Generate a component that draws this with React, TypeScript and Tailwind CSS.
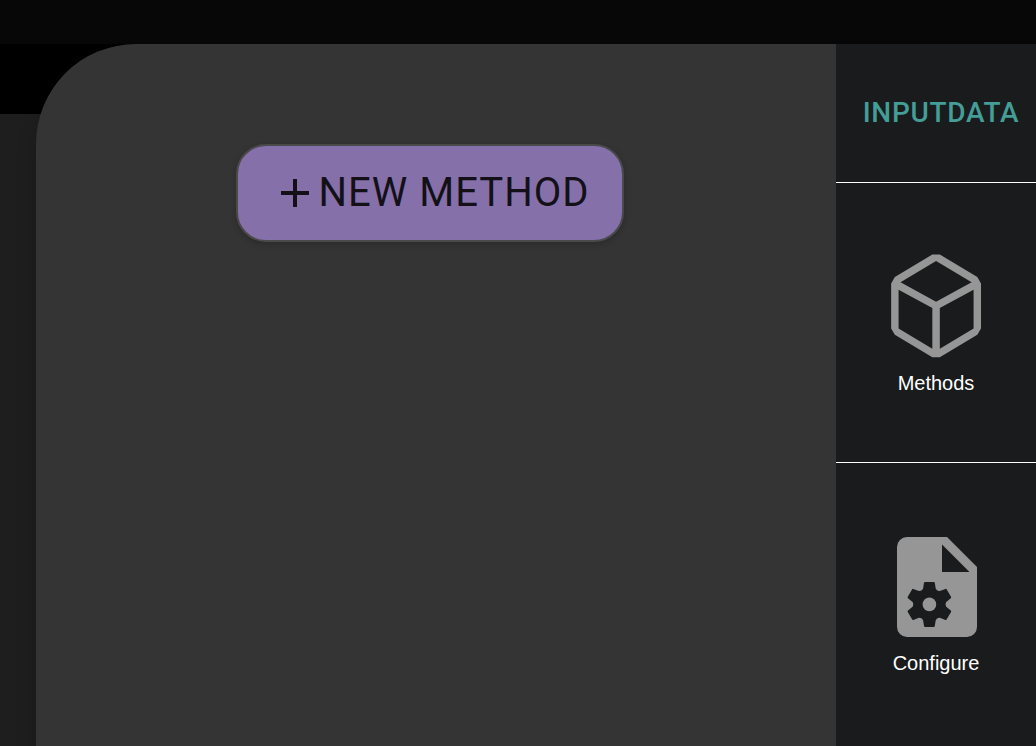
import type { ReactNode } from "react";

const teeth = [0, 60, 120, 180, 240, 300];

function PlusIcon() {
  return (
    <svg viewBox="0 0 24 24" className="size-12" fill="currentColor" aria-hidden="true">
      <path d="M19 13h-6v6h-2v-6H5v-2h6V5h2v6h6v2z" />
    </svg>
  );
}

function MethodsIcon() {
  return (
    <svg viewBox="0 0 16 16" className="size-[120px]" fill="currentColor" aria-hidden="true">
      <path
        fillRule="evenodd"
        clipRule="evenodd"
        d="M13.51 4l-5-3h-1l-5 3-.49.86v6l.49.85 5 3h1l5-3 .49-.85v-6L13.51 4zm-6 9.56l-4.5-2.7V5.7l4.5 2.45v5.41zM3.27 4.7l4.74-2.84 4.74 2.84-4.74 2.59L3.27 4.7zm9.74 6.16l-4.5 2.7V8.15l4.5-2.45v5.16z"
      />
    </svg>
  );
}

function ConfigureIcon() {
  return (
    <svg viewBox="-1 0 120 120" className="size-[120px]" fill="currentColor" aria-hidden="true">
      <path
        fillRule="evenodd"
        d="M30 10H70L100 40V100a10 10 0 0 1-10 10H30a10 10 0 0 1-10-10V20a10 10 0 0 1 10-10zM65 17.5V45H92.5z"
      />
      <g transform="translate(52.4 77.4)">
        <circle r="16.2" className="fill-[#191b1c]" />
        {teeth.map((angle) => (
          <path
            key={angle}
            transform={`rotate(${angle})`}
            className="fill-[#191b1c]"
            d="M-7.6-14L-6.3-15.8L-5.4-21.6Q-5.2-22.5-4.3-22.5H4.3Q5.2-22.5 5.4-21.6L6.3-15.8L7.6-14z"
          />
        ))}
        <circle r="6.8" />
      </g>
    </svg>
  );
}

function SideItem({ icon, label }: { icon: ReactNode; label: string }) {
  return (
    <button
      type="button"
      className="flex h-[280px] w-full shrink-0 flex-col items-center justify-center gap-1 border-b border-white pb-1 text-[#969696] last:border-b-0"
    >
      {icon}
      <span className="font-['Liberation_Sans',Arial,sans-serif] text-xl leading-6 text-white">{label}</span>
    </button>
  );
}

export default function App() {
  return (
    <div className="flex h-screen flex-col overflow-hidden bg-[#1e1e1e] font-[Roboto,sans-serif]">
      <header className="h-11 shrink-0 bg-[#070707]" />
      <div className="grid min-h-0 flex-1 grid-cols-1 grid-rows-1">
        <div className="col-start-1 row-start-1 h-[70px] bg-black" />
        <div className="col-start-1 row-start-1 ml-9 flex min-h-0 overflow-hidden rounded-tl-[100px] bg-[#343434] shadow-[0_16px_20px_rgba(0,0,0,0.2)]">
          <main className="flex flex-1 items-start justify-center pt-[100px]">
            <button
              type="button"
              className="mr-3 flex h-[98px] items-center rounded-[30px] border-2 border-[#4a4a4a] bg-[#8570aa] px-[33px] text-[40px] leading-[56px] tracking-wide text-[#131017] shadow-[0_2px_6px_rgba(0,0,0,0.2)]"
            >
              <PlusIcon />
              NEW METHOD
            </button>
          </main>
          <aside className="flex w-[200px] shrink-0 flex-col bg-[#191b1c]">
            <h2 className="flex h-[139px] shrink-0 items-center justify-center border-b border-white pl-2.5 text-[28px] font-medium tracking-wide text-[#449d96]">
              INPUTDATA
            </h2>
            <SideItem icon={<MethodsIcon />} label="Methods" />
            <SideItem icon={<ConfigureIcon />} label="Configure" />
          </aside>
        </div>
      </div>
    </div>
  );
}
